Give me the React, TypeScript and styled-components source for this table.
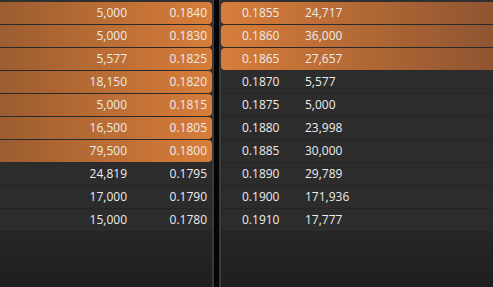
import styled, { createGlobalStyle } from 'styled-components'

type Level = {
    price: string;
    qty: string;
    hit: boolean;
}

const bids: Level[] = [
    { qty: '5,000', price: '0.1840', hit: true },
    { qty: '5,000', price: '0.1830', hit: true },
    { qty: '5,577', price: '0.1825', hit: true },
    { qty: '18,150', price: '0.1820', hit: true },
    { qty: '5,000', price: '0.1815', hit: true },
    { qty: '16,500', price: '0.1805', hit: true },
    { qty: '79,500', price: '0.1800', hit: true },
    { qty: '24,819', price: '0.1795', hit: false },
    { qty: '17,000', price: '0.1790', hit: false },
    { qty: '15,000', price: '0.1780', hit: false },
]

const asks: Level[] = [
    { price: '0.1855', qty: '24,717', hit: true },
    { price: '0.1860', qty: '36,000', hit: true },
    { price: '0.1865', qty: '27,657', hit: true },
    { price: '0.1870', qty: '5,577', hit: false },
    { price: '0.1875', qty: '5,000', hit: false },
    { price: '0.1880', qty: '23,998', hit: false },
    { price: '0.1885', qty: '30,000', hit: false },
    { price: '0.1890', qty: '29,789', hit: false },
    { price: '0.1900', qty: '171,936', hit: false },
    { price: '0.1910', qty: '17,777', hit: false },
]

const GlobalStyle = createGlobalStyle`
    html, body {
        margin: 0;
        padding: 0;
        background: #1f1f1f;
    }
    body {
        font-family: "Open Sans", "Noto Sans", sans-serif;
    }
`

const Book = styled.div`
    display: flex;
    width: 493px;
    height: 287px;
    overflow: hidden;
    background: #1f1f1f;
`

const Panel = styled.div<{ $width?: number }>`
    flex: ${p => (p.$width ? `0 0 ${p.$width}px` : '1 1 auto')};
    display: flex;
    flex-direction: column;
    padding-top: 2px;
    background: linear-gradient(to bottom, #303030 0, #303030 2px, #262626 232px, #1f1f1f 100%);
`

const Divider = styled.div`
    flex: 0 0 5px;
    background: #050505;
    border-left: 2px solid #393939;
    border-right: 2px solid #393939;
`

const Row = styled.div<{ $hit: boolean; $side: 'bid' | 'ask' }>`
    display: grid;
    height: 22px;
    line-height: 22px;
    margin-bottom: 1px;
    font-size: 12px;
    color: #ececec;
    box-shadow: 0 1px 0 ${p => (p.$hit ? '#2a2a2a' : '#252525')};
    grid-template-columns: ${p => (p.$side === 'bid' ? '1fr 80px' : '63px 1fr')};
    padding: ${p => (p.$side === 'bid' ? '0 5px 0 0' : '0 0 0 21px')};
    text-align: ${p => (p.$side === 'bid' ? 'right' : 'left')};
    border-radius: ${p => (p.$side === 'bid' ? '0 4px 4px 0' : '4px 0 0 4px')};
    background: ${p =>
        !p.$hit
            ? '#2c2c2c'
            : p.$side === 'bid'
            ? 'linear-gradient(to right, #9c5d30, #d87d3a)'
            : 'linear-gradient(to right, #d87d3a, #8f5531)'};
`

const Cell = styled.span`
    white-space: nowrap;
`

export default function App() {
    return (
        <>
            <GlobalStyle />
            <Book>
                <Panel $width={212}>
                    {bids.map(l => (
                        <Row key={l.price} $hit={l.hit} $side="bid">
                            <Cell>{l.qty}</Cell>
                            <Cell>{l.price}</Cell>
                        </Row>
                    ))}
                </Panel>
                <Divider />
                <Panel>
                    {asks.map(l => (
                        <Row key={l.price} $hit={l.hit} $side="ask">
                            <Cell>{l.price}</Cell>
                            <Cell>{l.qty}</Cell>
                        </Row>
                    ))}
                </Panel>
            </Book>
        </>
    )
}
